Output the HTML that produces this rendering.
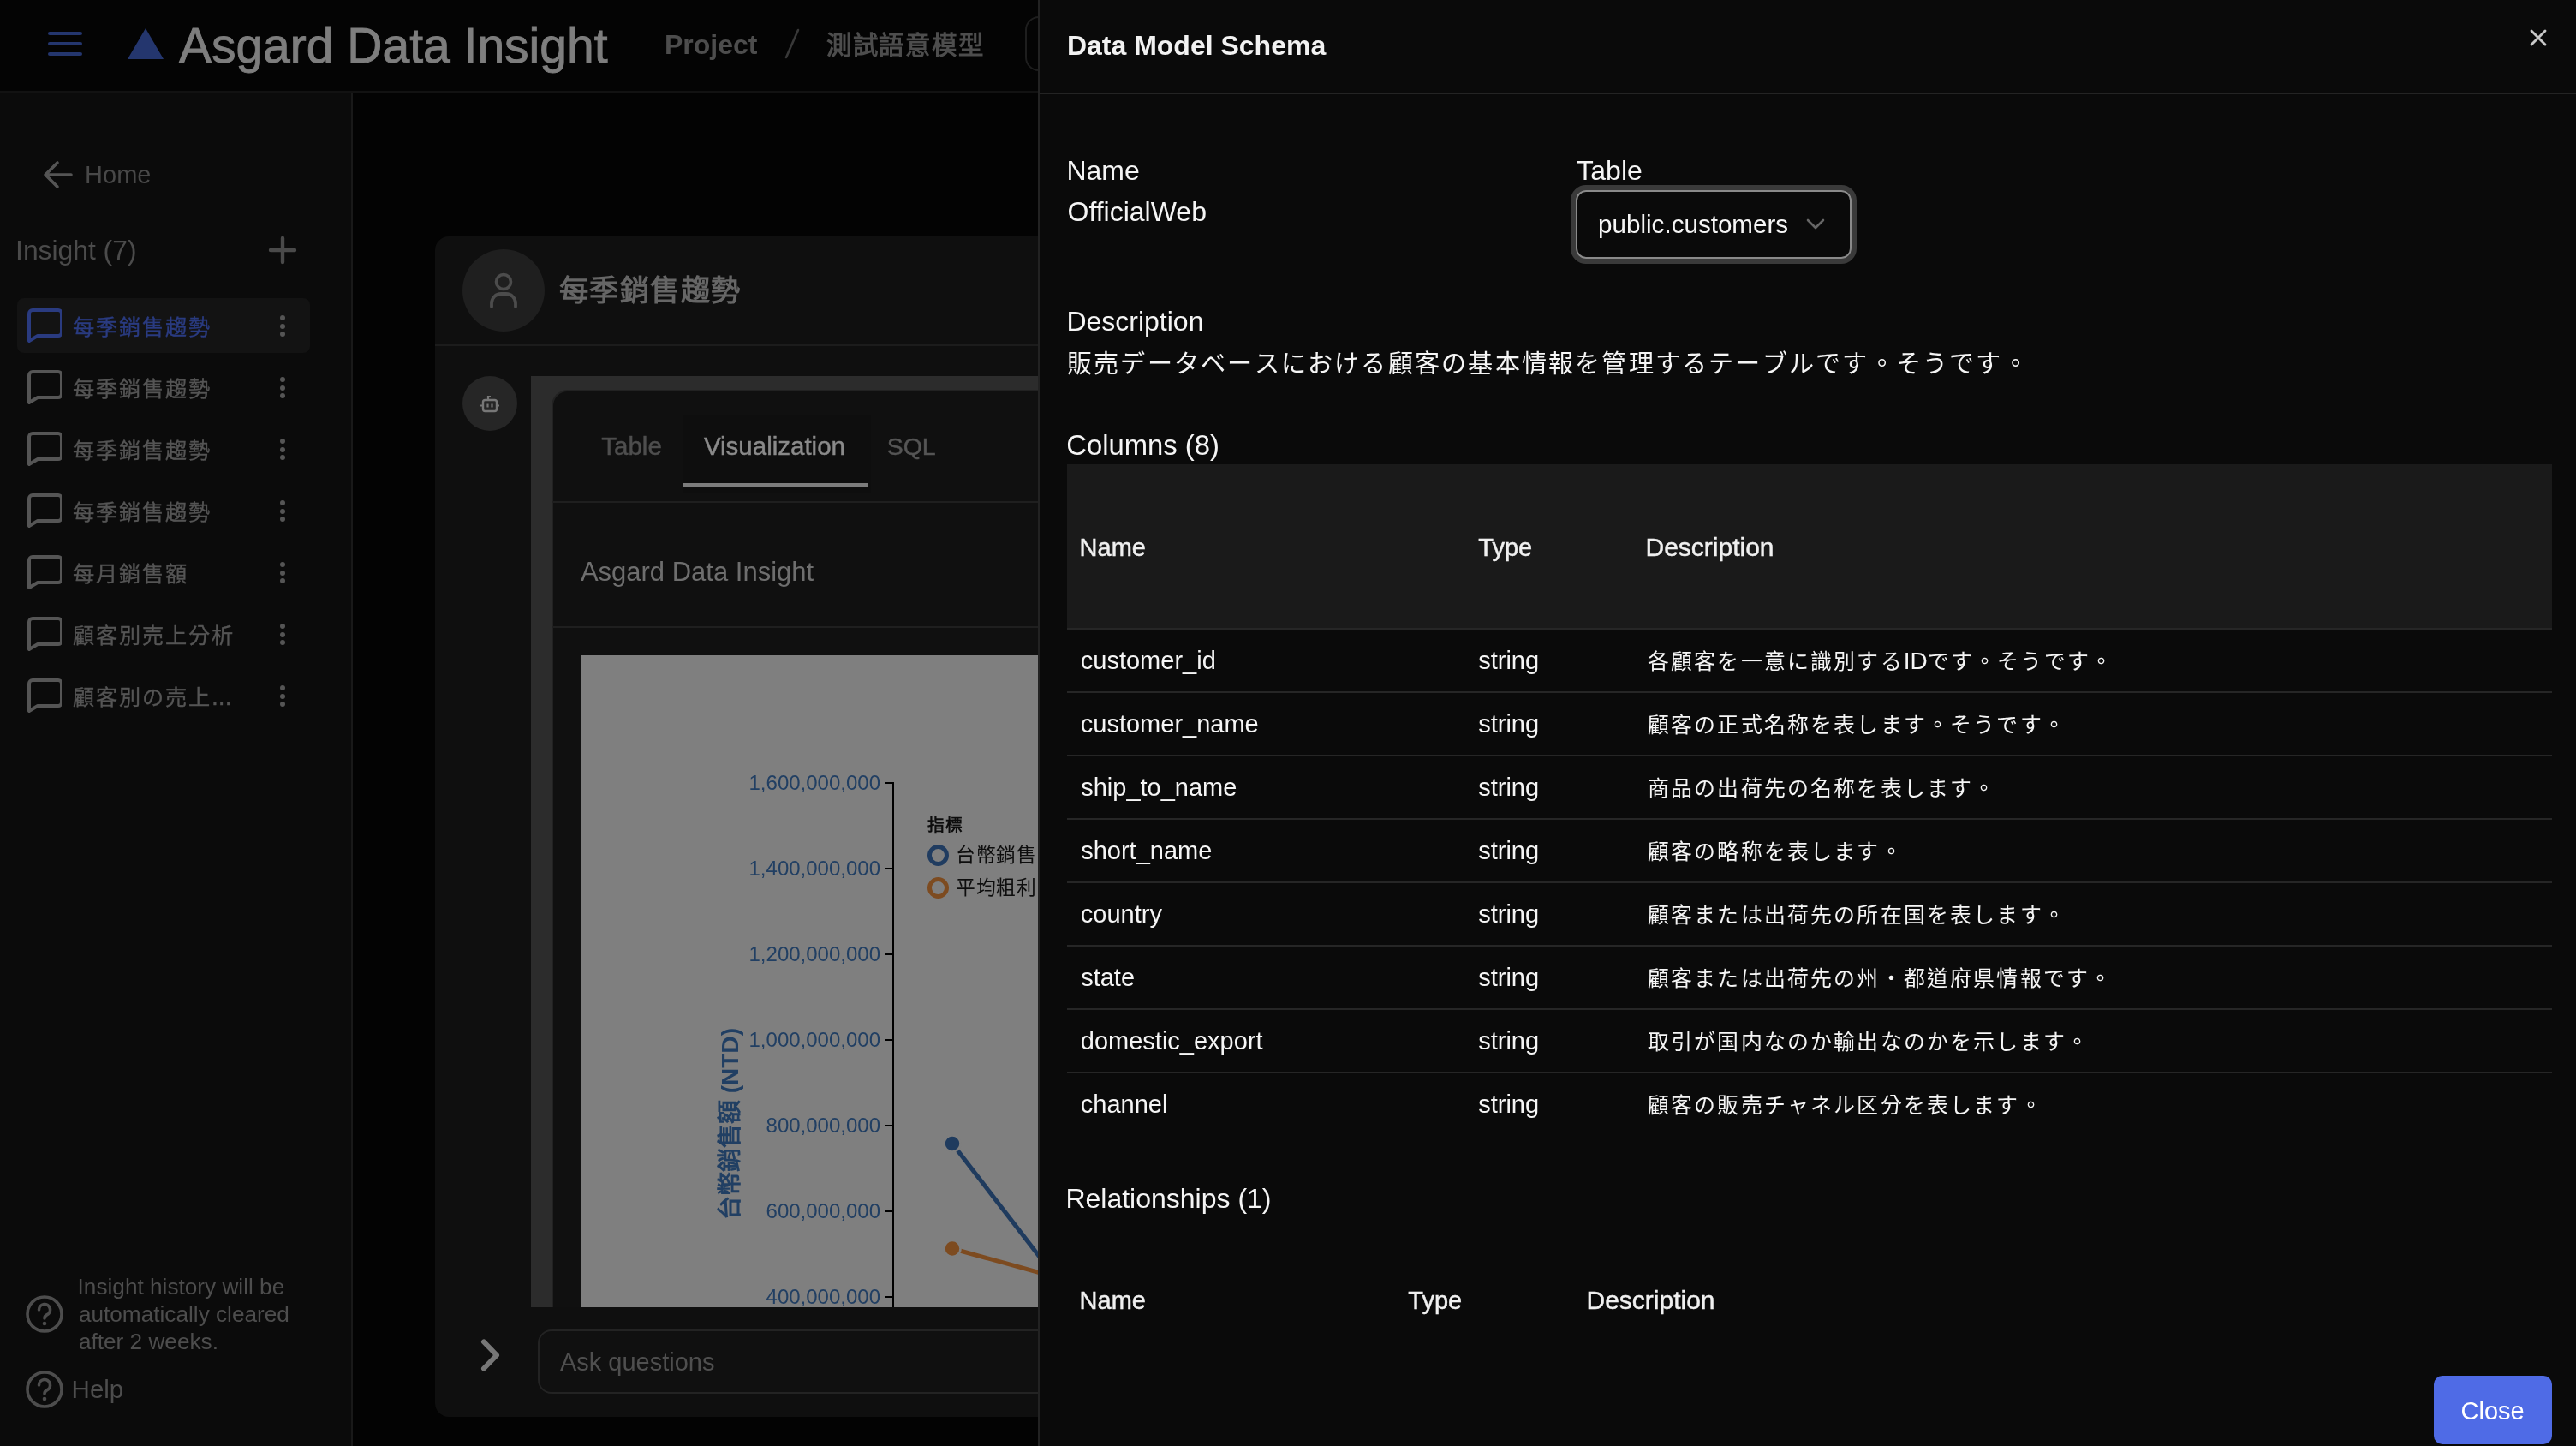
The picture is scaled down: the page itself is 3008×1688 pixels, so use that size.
<!DOCTYPE html>
<html lang="zh-TW"><head><meta charset="utf-8"><title>Data Model Schema</title>
<style>
html,body{margin:0;padding:0;}
body{width:3008px;height:1688px;overflow:hidden;position:relative;background:#030303;font-family:"Liberation Sans",sans-serif;}
#root{position:absolute;left:0;top:0;width:3008px;height:1688px;will-change:transform;}
#root>div,#root>svg{position:absolute;}
.t{white-space:nowrap;}
i{display:inline-block;font-style:normal;}
</style></head><body><div id="root">
<div style="left:0px;top:0px;width:3008px;height:106px;background:#040404;"></div>
<div style="left:0px;top:106px;width:1212px;height:2px;background:#121212;"></div>
<div style="left:56px;top:37px;width:40px;height:4px;background:#24366e;border-radius:2px;"></div>
<div style="left:56px;top:49px;width:40px;height:4px;background:#24366e;border-radius:2px;"></div>
<div style="left:56px;top:61px;width:40px;height:4px;background:#24366e;border-radius:2px;"></div>
<svg style="left:149px;top:33px" width="42" height="36" viewBox="0 0 42 36"><polygon points="21,0 42,36 0,36" fill="#24366e"/></svg>
<div class="t" style="left:208.9px;top:18.3px;font-size:57px;line-height:71px;color:#7e7e7e;-webkit-text-stroke:0.9px currentColor;">Asgard Data Insight</div>
<div class="t" style="left:775.9px;top:31.9px;font-size:32px;line-height:40px;color:#4d4d4d;font-weight:700;">Project</div>
<svg style="left:910px;top:30px" width="30" height="42" viewBox="0 0 30 42"><path d="M22 5L8 37" stroke="#383838" stroke-width="2.6" stroke-linecap="round"/></svg>
<div class="t" style="left:965.0px;top:31.9px;font-size:32px;line-height:40px;color:#4d4d4d;font-weight:700;"><i style="width:30.72px;font-size:29.44px">測</i><i style="width:30.72px;font-size:29.44px">試</i><i style="width:30.72px;font-size:29.44px">語</i><i style="width:30.72px;font-size:29.44px">意</i><i style="width:30.72px;font-size:29.44px">模</i><i style="width:30.72px;font-size:29.44px">型</i></div>
<div style="left:1197px;top:19px;width:60px;height:64px;background:transparent;border:2px solid #1e1e1e;border-radius:16px;box-sizing:border-box;"></div>
<div style="left:0px;top:108px;width:410px;height:1580px;background:#0b0b0b;"></div>
<div style="left:410px;top:108px;width:2px;height:1580px;background:#191919;"></div>
<svg style="left:50px;top:186px" width="36" height="36" viewBox="0 0 36 36"><path d="M33 18H4M17 4L3 18l14 14" fill="none" stroke="#555" stroke-width="3.6" stroke-linecap="round" stroke-linejoin="round"/></svg>
<div class="t" style="left:99.1px;top:185.9px;font-size:29px;line-height:36px;color:#484848;">Home</div>
<div class="t" style="left:18.1px;top:272.0px;font-size:31.8px;line-height:40px;color:#4b4b4b;">Insight (7)</div>
<svg style="left:312px;top:274px" width="36" height="36" viewBox="0 0 36 36"><path d="M18 4v28M4 18h28" fill="none" stroke="#4a4a4a" stroke-width="4.4" stroke-linecap="round"/></svg>
<div style="left:20px;top:348px;width:342px;height:64px;background:#131313;border-radius:8px;"></div>
<svg style="left:32px;top:360px" width="40" height="40" viewBox="0 0 40 40"><path d="M2 38V6a4 4 0 0 1 4-4h30a4 4 0 0 1 4 4v22a4 4 0 0 1-4 4H12z" fill="none" stroke="#2a3b80" stroke-width="4" stroke-linejoin="round"/></svg>
<div class="t" style="left:85.0px;top:363.8px;font-size:28px;line-height:35px;color:#2a3b80;-webkit-text-stroke:0.35px currentColor;"><i style="width:27.02px;font-size:25.20px">每</i><i style="width:27.02px;font-size:25.20px">季</i><i style="width:27.02px;font-size:25.20px">銷</i><i style="width:27.02px;font-size:25.20px">售</i><i style="width:27.02px;font-size:25.20px">趨</i><i style="width:27.02px;font-size:25.20px">勢</i></div>
<div style="left:327px;top:368.0px;width:6px;height:6px;background:#555;border-radius:3px;"></div>
<div style="left:327px;top:377.5px;width:6px;height:6px;background:#555;border-radius:3px;"></div>
<div style="left:327px;top:387.0px;width:6px;height:6px;background:#555;border-radius:3px;"></div>
<svg style="left:32px;top:432px" width="40" height="40" viewBox="0 0 40 40"><path d="M2 38V6a4 4 0 0 1 4-4h30a4 4 0 0 1 4 4v22a4 4 0 0 1-4 4H12z" fill="none" stroke="#555555" stroke-width="4" stroke-linejoin="round"/></svg>
<div class="t" style="left:85.0px;top:435.8px;font-size:28px;line-height:35px;color:#555555;-webkit-text-stroke:0.35px currentColor;"><i style="width:27.02px;font-size:25.20px">每</i><i style="width:27.02px;font-size:25.20px">季</i><i style="width:27.02px;font-size:25.20px">銷</i><i style="width:27.02px;font-size:25.20px">售</i><i style="width:27.02px;font-size:25.20px">趨</i><i style="width:27.02px;font-size:25.20px">勢</i></div>
<div style="left:327px;top:440.0px;width:6px;height:6px;background:#555;border-radius:3px;"></div>
<div style="left:327px;top:449.5px;width:6px;height:6px;background:#555;border-radius:3px;"></div>
<div style="left:327px;top:459.0px;width:6px;height:6px;background:#555;border-radius:3px;"></div>
<svg style="left:32px;top:504px" width="40" height="40" viewBox="0 0 40 40"><path d="M2 38V6a4 4 0 0 1 4-4h30a4 4 0 0 1 4 4v22a4 4 0 0 1-4 4H12z" fill="none" stroke="#555555" stroke-width="4" stroke-linejoin="round"/></svg>
<div class="t" style="left:85.0px;top:507.8px;font-size:28px;line-height:35px;color:#555555;-webkit-text-stroke:0.35px currentColor;"><i style="width:27.02px;font-size:25.20px">每</i><i style="width:27.02px;font-size:25.20px">季</i><i style="width:27.02px;font-size:25.20px">銷</i><i style="width:27.02px;font-size:25.20px">售</i><i style="width:27.02px;font-size:25.20px">趨</i><i style="width:27.02px;font-size:25.20px">勢</i></div>
<div style="left:327px;top:512.0px;width:6px;height:6px;background:#555;border-radius:3px;"></div>
<div style="left:327px;top:521.5px;width:6px;height:6px;background:#555;border-radius:3px;"></div>
<div style="left:327px;top:531.0px;width:6px;height:6px;background:#555;border-radius:3px;"></div>
<svg style="left:32px;top:576px" width="40" height="40" viewBox="0 0 40 40"><path d="M2 38V6a4 4 0 0 1 4-4h30a4 4 0 0 1 4 4v22a4 4 0 0 1-4 4H12z" fill="none" stroke="#555555" stroke-width="4" stroke-linejoin="round"/></svg>
<div class="t" style="left:85.0px;top:579.8px;font-size:28px;line-height:35px;color:#555555;-webkit-text-stroke:0.35px currentColor;"><i style="width:27.02px;font-size:25.20px">每</i><i style="width:27.02px;font-size:25.20px">季</i><i style="width:27.02px;font-size:25.20px">銷</i><i style="width:27.02px;font-size:25.20px">售</i><i style="width:27.02px;font-size:25.20px">趨</i><i style="width:27.02px;font-size:25.20px">勢</i></div>
<div style="left:327px;top:584.0px;width:6px;height:6px;background:#555;border-radius:3px;"></div>
<div style="left:327px;top:593.5px;width:6px;height:6px;background:#555;border-radius:3px;"></div>
<div style="left:327px;top:603.0px;width:6px;height:6px;background:#555;border-radius:3px;"></div>
<svg style="left:32px;top:648px" width="40" height="40" viewBox="0 0 40 40"><path d="M2 38V6a4 4 0 0 1 4-4h30a4 4 0 0 1 4 4v22a4 4 0 0 1-4 4H12z" fill="none" stroke="#555555" stroke-width="4" stroke-linejoin="round"/></svg>
<div class="t" style="left:85.0px;top:651.8px;font-size:28px;line-height:35px;color:#555555;-webkit-text-stroke:0.35px currentColor;"><i style="width:27.02px;font-size:25.20px">每</i><i style="width:27.02px;font-size:25.20px">月</i><i style="width:27.02px;font-size:25.20px">銷</i><i style="width:27.02px;font-size:25.20px">售</i><i style="width:27.02px;font-size:25.20px">額</i></div>
<div style="left:327px;top:656.0px;width:6px;height:6px;background:#555;border-radius:3px;"></div>
<div style="left:327px;top:665.5px;width:6px;height:6px;background:#555;border-radius:3px;"></div>
<div style="left:327px;top:675.0px;width:6px;height:6px;background:#555;border-radius:3px;"></div>
<svg style="left:32px;top:720px" width="40" height="40" viewBox="0 0 40 40"><path d="M2 38V6a4 4 0 0 1 4-4h30a4 4 0 0 1 4 4v22a4 4 0 0 1-4 4H12z" fill="none" stroke="#555555" stroke-width="4" stroke-linejoin="round"/></svg>
<div class="t" style="left:85.0px;top:723.8px;font-size:28px;line-height:35px;color:#555555;-webkit-text-stroke:0.35px currentColor;"><i style="width:27.02px;font-size:25.20px">顧</i><i style="width:27.02px;font-size:25.20px">客</i><i style="width:27.02px;font-size:25.20px">別</i><i style="width:27.02px;font-size:25.20px">売</i><i style="width:27.02px;font-size:25.20px">上</i><i style="width:27.02px;font-size:25.20px">分</i><i style="width:27.02px;font-size:25.20px">析</i></div>
<div style="left:327px;top:728.0px;width:6px;height:6px;background:#555;border-radius:3px;"></div>
<div style="left:327px;top:737.5px;width:6px;height:6px;background:#555;border-radius:3px;"></div>
<div style="left:327px;top:747.0px;width:6px;height:6px;background:#555;border-radius:3px;"></div>
<svg style="left:32px;top:792px" width="40" height="40" viewBox="0 0 40 40"><path d="M2 38V6a4 4 0 0 1 4-4h30a4 4 0 0 1 4 4v22a4 4 0 0 1-4 4H12z" fill="none" stroke="#555555" stroke-width="4" stroke-linejoin="round"/></svg>
<div class="t" style="left:85.0px;top:795.8px;font-size:28px;line-height:35px;color:#555555;-webkit-text-stroke:0.35px currentColor;"><i style="width:27.02px;font-size:25.20px">顧</i><i style="width:27.02px;font-size:25.20px">客</i><i style="width:27.02px;font-size:25.20px">別</i><i style="width:27.02px;font-size:25.20px">の</i><i style="width:27.02px;font-size:25.20px">売</i><i style="width:27.02px;font-size:25.20px">上</i>...</div>
<div style="left:327px;top:800.0px;width:6px;height:6px;background:#555;border-radius:3px;"></div>
<div style="left:327px;top:809.5px;width:6px;height:6px;background:#555;border-radius:3px;"></div>
<div style="left:327px;top:819.0px;width:6px;height:6px;background:#555;border-radius:3px;"></div>
<svg style="left:30px;top:1512px" width="44" height="44" viewBox="0 0 44 44"><circle cx="22" cy="22" r="20" fill="none" stroke="#4d4d4d" stroke-width="3.6"/><path d="M15.5 17a6.5 6.5 0 1 1 9 6c-1.8 .8-2.5 1.8-2.5 4" fill="none" stroke="#4d4d4d" stroke-width="3.6" stroke-linecap="round"/><circle cx="22" cy="33" r="2.3" fill="#4d4d4d"/></svg>
<div class="t" style="left:90.6px;top:1486.4px;font-size:26.2px;line-height:33px;color:#4d4d4d;">Insight history will be</div>
<div class="t" style="left:91.9px;top:1518.4px;font-size:26.2px;line-height:33px;color:#4d4d4d;">automatically cleared</div>
<div class="t" style="left:91.9px;top:1550.4px;font-size:26.2px;line-height:33px;color:#4d4d4d;">after 2 weeks.</div>
<svg style="left:30px;top:1600px" width="44" height="44" viewBox="0 0 44 44"><circle cx="22" cy="22" r="20" fill="none" stroke="#4d4d4d" stroke-width="3.6"/><path d="M15.5 17a6.5 6.5 0 1 1 9 6c-1.8 .8-2.5 1.8-2.5 4" fill="none" stroke="#4d4d4d" stroke-width="3.6" stroke-linecap="round"/><circle cx="22" cy="33" r="2.3" fill="#4d4d4d"/></svg>
<div class="t" style="left:83.6px;top:1603.3px;font-size:29.5px;line-height:37px;color:#4d4d4d;">Help</div>
<div style="left:412px;top:108px;width:800px;height:1580px;background:#030303;"></div>
<div style="left:508px;top:276px;width:720px;height:1378px;background:#0f0f0f;border-radius:16px;"></div>
<div style="left:540px;top:291px;width:96px;height:96px;background:#1f1f1f;border-radius:50%;"></div>
<svg style="left:568px;top:316px" width="40" height="46" viewBox="0 0 40 46"><circle cx="20" cy="13" r="8.5" fill="none" stroke="#4c4c4c" stroke-width="3.6"/><path d="M6 42v-4a11 11 0 0 1 11-11h6a11 11 0 0 1 11 11v4" fill="none" stroke="#4c4c4c" stroke-width="3.8" stroke-linecap="round"/></svg>
<div class="t" style="left:653.0px;top:316.0px;font-size:36px;line-height:45px;color:#666666;font-weight:700;"><i style="width:35.46px;font-size:34.20px">每</i><i style="width:35.46px;font-size:34.20px">季</i><i style="width:35.46px;font-size:34.20px">銷</i><i style="width:35.46px;font-size:34.20px">售</i><i style="width:35.46px;font-size:34.20px">趨</i><i style="width:35.46px;font-size:34.20px">勢</i></div>
<div style="left:508px;top:402px;width:704px;height:2px;background:#1c1c1c;"></div>
<div style="left:540px;top:439px;width:64px;height:64px;background:#262626;border-radius:50%;"></div>
<svg style="left:558px;top:458px" width="28" height="26" viewBox="0 0 28 26"><rect x="6" y="9" width="16" height="13" rx="2.5" fill="none" stroke="#777" stroke-width="2.4"/><path d="M12 9V5h3" fill="none" stroke="#777" stroke-width="2.2"/><path d="M3 15.5h3M22 15.5h3M11.5 13.5v4M16.5 13.5v4" stroke="#777" stroke-width="2.2"/></svg>
<div style="left:620px;top:439px;width:600px;height:1087px;background:#2c2c2c;"></div>
<div style="left:644px;top:455px;width:581px;height:1071px;background:#101010;border-top:2px solid #222;border-left:2px solid #222;box-sizing:border-box;border-top-left-radius:19px;"></div>
<div style="left:797px;top:484px;width:220px;height:92px;background:#0e0e0e;"></div>
<div class="t" style="left:702.3px;top:502.3px;font-size:29.5px;line-height:37px;color:#4e4e4e;-webkit-text-stroke:0.45px currentColor;">Table</div>
<div class="t" style="left:821.9px;top:502.3px;font-size:29.5px;line-height:37px;color:#8a8a8a;-webkit-text-stroke:0.45px currentColor;">Visualization</div>
<div class="t" style="left:1035.7px;top:503.1px;font-size:28.5px;line-height:36px;color:#555555;-webkit-text-stroke:0.45px currentColor;">SQL</div>
<div style="left:797px;top:564px;width:216px;height:4px;background:#7c7c7c;"></div>
<div style="left:645px;top:585px;width:570px;height:2px;background:#1f1f1f;"></div>
<div class="t" style="left:677.9px;top:647.8px;font-size:31px;line-height:39px;color:#6e6e6e;">Asgard Data Insight</div>
<div style="left:645px;top:731px;width:570px;height:2px;background:#1f1f1f;"></div>
<div style="left:678px;top:765px;width:534px;height:761px;background:#7f7f7f;"></div>
<div style="left:1042px;top:913px;width:2px;height:613px;background:#000;"></div>
<div style="left:1033px;top:913px;width:10px;height:2px;background:#000;"></div>
<div class="t" style="left:700px;width:328px;text-align:right;top:899px;font-size:24px;line-height:30px;color:#213f63">1,600,000,000</div>
<div style="left:1033px;top:1013px;width:10px;height:2px;background:#000;"></div>
<div class="t" style="left:700px;width:328px;text-align:right;top:999px;font-size:24px;line-height:30px;color:#213f63">1,400,000,000</div>
<div style="left:1033px;top:1113px;width:10px;height:2px;background:#000;"></div>
<div class="t" style="left:700px;width:328px;text-align:right;top:1099px;font-size:24px;line-height:30px;color:#213f63">1,200,000,000</div>
<div style="left:1033px;top:1213px;width:10px;height:2px;background:#000;"></div>
<div class="t" style="left:700px;width:328px;text-align:right;top:1199px;font-size:24px;line-height:30px;color:#213f63">1,000,000,000</div>
<div style="left:1033px;top:1313px;width:10px;height:2px;background:#000;"></div>
<div class="t" style="left:700px;width:328px;text-align:right;top:1299px;font-size:24px;line-height:30px;color:#213f63">800,000,000</div>
<div style="left:1033px;top:1413px;width:10px;height:2px;background:#000;"></div>
<div class="t" style="left:700px;width:328px;text-align:right;top:1399px;font-size:24px;line-height:30px;color:#213f63">600,000,000</div>
<div style="left:1033px;top:1513px;width:10px;height:2px;background:#000;"></div>
<div class="t" style="left:700px;width:328px;text-align:right;top:1499px;font-size:24px;line-height:30px;color:#213f63">400,000,000</div>
<div class="t" style="left:853px;top:1312px;font-size:28px;line-height:30px;color:#213f63;font-weight:700;transform:translate(-50%,-50%) rotate(-90deg);white-space:nowrap">台幣銷售額 (NTD)</div>
<div class="t" style="left:1083.0px;top:949.4px;font-size:22px;line-height:28px;color:#0d0d0d;font-weight:700;"><i style="width:21.34px;font-size:19.80px">指</i><i style="width:21.34px;font-size:19.80px">標</i></div>
<div style="left:1083px;top:986px;width:25px;height:25px;border:5px solid #203c60;border-radius:50%;box-sizing:border-box"></div>
<div style="left:1083px;top:1024px;width:25px;height:25px;border:5px solid #7d4b20;border-radius:50%;box-sizing:border-box"></div>
<div class="t" style="left:1116.0px;top:982.7px;font-size:24px;line-height:30px;color:#0d0d0d;"><i style="width:23.64px;font-size:22.80px">台</i><i style="width:23.64px;font-size:22.80px">幣</i><i style="width:23.64px;font-size:22.80px">銷</i><i style="width:23.64px;font-size:22.80px">售</i><i style="width:23.64px;font-size:22.80px">額</i></div>
<div class="t" style="left:1116.0px;top:1020.7px;font-size:24px;line-height:30px;color:#0d0d0d;"><i style="width:23.64px;font-size:22.80px">平</i><i style="width:23.64px;font-size:22.80px">均</i><i style="width:23.64px;font-size:22.80px">粗</i><i style="width:23.64px;font-size:22.80px">利</i><i style="width:23.64px;font-size:22.80px">率</i></div>
<svg style="left:678px;top:765px" width="534" height="761" viewBox="678 765 534 761"><path d="M1112 1335L1230 1488" stroke="#1f3b5e" stroke-width="5"/><circle cx="1112" cy="1335" r="9.5" fill="#1f3b5e" stroke="#7f7f7f" stroke-width="2.5"/><path d="M1112 1457.5L1230 1490" stroke="#7d4b20" stroke-width="5"/><circle cx="1112" cy="1457.5" r="9.5" fill="#7d4b20" stroke="#7f7f7f" stroke-width="2.5"/></svg>
<svg style="left:556px;top:1558px" width="32" height="48" viewBox="0 0 32 48"><path d="M9 8.5l15 15.5-15 15.5" fill="none" stroke="#777" stroke-width="6" stroke-linecap="round" stroke-linejoin="round"/></svg>
<div style="left:628px;top:1552px;width:620px;height:75px;background:#101010;border:2px solid #232323;border-radius:16px;box-sizing:border-box;"></div>
<div class="t" style="left:653.9px;top:1571.9px;font-size:29px;line-height:36px;color:#4f4f4f;">Ask questions</div>
<div style="left:1212px;top:0px;width:1796px;height:1688px;background:#0a0a0a;"></div>
<div style="left:1212px;top:0px;width:2px;height:1688px;background:#222222;"></div>
<div class="t" style="left:1245.9px;top:32.9px;font-size:32px;line-height:40px;color:#f2f2f2;font-weight:700;">Data Model Schema</div>
<svg style="left:2950px;top:30px" width="28" height="28" viewBox="0 0 28 28"><path d="M6 6l16 16M22 6L6 22" stroke="#c8c8c8" stroke-width="2.9" stroke-linecap="round"/></svg>
<div style="left:1214px;top:108px;width:1794px;height:2px;background:#242424;"></div>
<div class="t" style="left:1245.4px;top:178.9px;font-size:32px;line-height:40px;color:#f5f5f5;">Name</div>
<div class="t" style="left:1246.5px;top:226.9px;font-size:32px;line-height:40px;color:#f5f5f5;">OfficialWeb</div>
<div class="t" style="left:1841.3px;top:178.9px;font-size:32px;line-height:40px;color:#f5f5f5;">Table</div>
<div style="left:1834px;top:216px;width:334px;height:92px;background:transparent;border:6px solid #3a3a3a;border-radius:18px;box-sizing:border-box;"></div>
<div style="left:1840px;top:222px;width:322px;height:80px;background:#0a0a0a;border:2px solid #8a8a8a;border-radius:12px;box-sizing:border-box;"></div>
<div class="t" style="left:1866.1px;top:243.2px;font-size:29.6px;line-height:37px;color:#f5f5f5;">public.customers</div>
<svg style="left:2108px;top:253px" width="24" height="16" viewBox="0 0 24 16"><path d="M3 4l9 9 9-9" fill="none" stroke="#666" stroke-width="2.6" stroke-linecap="round" stroke-linejoin="round"/></svg>
<div class="t" style="left:1245.4px;top:354.9px;font-size:32px;line-height:40px;color:#f5f5f5;">Description</div>
<div class="t" style="left:1246.0px;top:403.9px;font-size:32px;line-height:40px;color:#f5f5f5;"><i style="width:31.23px;font-size:29.12px">販</i><i style="width:31.23px;font-size:29.12px">売</i><i style="width:31.23px;font-size:29.12px">デ</i><i style="width:31.23px;font-size:29.12px">ー</i><i style="width:31.23px;font-size:29.12px">タ</i><i style="width:31.23px;font-size:29.12px">ベ</i><i style="width:31.23px;font-size:29.12px">ー</i><i style="width:31.23px;font-size:29.12px">ス</i><i style="width:31.23px;font-size:29.12px">に</i><i style="width:31.23px;font-size:29.12px">お</i><i style="width:31.23px;font-size:29.12px">け</i><i style="width:31.23px;font-size:29.12px">る</i><i style="width:31.23px;font-size:29.12px">顧</i><i style="width:31.23px;font-size:29.12px">客</i><i style="width:31.23px;font-size:29.12px">の</i><i style="width:31.23px;font-size:29.12px">基</i><i style="width:31.23px;font-size:29.12px">本</i><i style="width:31.23px;font-size:29.12px">情</i><i style="width:31.23px;font-size:29.12px">報</i><i style="width:31.23px;font-size:29.12px">を</i><i style="width:31.23px;font-size:29.12px">管</i><i style="width:31.23px;font-size:29.12px">理</i><i style="width:31.23px;font-size:29.12px">す</i><i style="width:31.23px;font-size:29.12px">る</i><i style="width:31.23px;font-size:29.12px">テ</i><i style="width:31.23px;font-size:29.12px">ー</i><i style="width:31.23px;font-size:29.12px">ブ</i><i style="width:31.23px;font-size:29.12px">ル</i><i style="width:31.23px;font-size:29.12px">で</i><i style="width:31.23px;font-size:29.12px">す</i><i style="width:31.23px;font-size:29.12px">。</i><i style="width:31.23px;font-size:29.12px">そ</i><i style="width:31.23px;font-size:29.12px">う</i><i style="width:31.23px;font-size:29.12px">で</i><i style="width:31.23px;font-size:29.12px">す</i><i style="width:31.23px;font-size:29.12px">。</i></div>
<div class="t" style="left:1245.3px;top:499.1px;font-size:32.8px;line-height:41px;color:#f5f5f5;">Columns (8)</div>
<div style="left:1246px;top:542px;width:1734px;height:191px;background:#1a1a1a;"></div>
<div style="left:1246px;top:733px;width:1734px;height:2px;background:#262626;"></div>
<div class="t" style="left:1260.6px;top:620.9px;font-size:29px;line-height:36px;color:#f0f0f0;-webkit-text-stroke:0.45px currentColor;">Name</div>
<div class="t" style="left:1726.3px;top:620.9px;font-size:29px;line-height:36px;color:#f0f0f0;-webkit-text-stroke:0.45px currentColor;">Type</div>
<div class="t" style="left:1921.5px;top:619.6px;font-size:30px;line-height:38px;color:#f0f0f0;-webkit-text-stroke:0.45px currentColor;">Description</div>
<div class="t" style="left:1261.8px;top:752.9px;font-size:29px;line-height:36px;color:#f5f5f5;">customer_id</div>
<div class="t" style="left:1726.2px;top:752.9px;font-size:29px;line-height:36px;color:#f5f5f5;">string</div>
<div class="t" style="left:1924.0px;top:753.8px;font-size:28px;line-height:35px;color:#f5f5f5;"><i style="width:27.16px;font-size:24.92px">各</i><i style="width:27.16px;font-size:24.92px">顧</i><i style="width:27.16px;font-size:24.92px">客</i><i style="width:27.16px;font-size:24.92px">を</i><i style="width:27.16px;font-size:24.92px">一</i><i style="width:27.16px;font-size:24.92px">意</i><i style="width:27.16px;font-size:24.92px">に</i><i style="width:27.16px;font-size:24.92px">識</i><i style="width:27.16px;font-size:24.92px">別</i><i style="width:27.16px;font-size:24.92px">す</i><i style="width:27.16px;font-size:24.92px">る</i>ID<i style="width:27.16px;font-size:24.92px">で</i><i style="width:27.16px;font-size:24.92px">す</i><i style="width:27.16px;font-size:24.92px">。</i><i style="width:27.16px;font-size:24.92px">そ</i><i style="width:27.16px;font-size:24.92px">う</i><i style="width:27.16px;font-size:24.92px">で</i><i style="width:27.16px;font-size:24.92px">す</i><i style="width:27.16px;font-size:24.92px">。</i></div>
<div style="left:1246px;top:807px;width:1734px;height:2px;background:#262626;"></div>
<div class="t" style="left:1261.8px;top:826.9px;font-size:29px;line-height:36px;color:#f5f5f5;">customer_name</div>
<div class="t" style="left:1726.2px;top:826.9px;font-size:29px;line-height:36px;color:#f5f5f5;">string</div>
<div class="t" style="left:1924.0px;top:827.8px;font-size:28px;line-height:35px;color:#f5f5f5;"><i style="width:27.16px;font-size:24.92px">顧</i><i style="width:27.16px;font-size:24.92px">客</i><i style="width:27.16px;font-size:24.92px">の</i><i style="width:27.16px;font-size:24.92px">正</i><i style="width:27.16px;font-size:24.92px">式</i><i style="width:27.16px;font-size:24.92px">名</i><i style="width:27.16px;font-size:24.92px">称</i><i style="width:27.16px;font-size:24.92px">を</i><i style="width:27.16px;font-size:24.92px">表</i><i style="width:27.16px;font-size:24.92px">し</i><i style="width:27.16px;font-size:24.92px">ま</i><i style="width:27.16px;font-size:24.92px">す</i><i style="width:27.16px;font-size:24.92px">。</i><i style="width:27.16px;font-size:24.92px">そ</i><i style="width:27.16px;font-size:24.92px">う</i><i style="width:27.16px;font-size:24.92px">で</i><i style="width:27.16px;font-size:24.92px">す</i><i style="width:27.16px;font-size:24.92px">。</i></div>
<div style="left:1246px;top:881px;width:1734px;height:2px;background:#262626;"></div>
<div class="t" style="left:1262.2px;top:900.9px;font-size:29px;line-height:36px;color:#f5f5f5;">ship_to_name</div>
<div class="t" style="left:1726.2px;top:900.9px;font-size:29px;line-height:36px;color:#f5f5f5;">string</div>
<div class="t" style="left:1924.0px;top:901.8px;font-size:28px;line-height:35px;color:#f5f5f5;"><i style="width:27.16px;font-size:24.92px">商</i><i style="width:27.16px;font-size:24.92px">品</i><i style="width:27.16px;font-size:24.92px">の</i><i style="width:27.16px;font-size:24.92px">出</i><i style="width:27.16px;font-size:24.92px">荷</i><i style="width:27.16px;font-size:24.92px">先</i><i style="width:27.16px;font-size:24.92px">の</i><i style="width:27.16px;font-size:24.92px">名</i><i style="width:27.16px;font-size:24.92px">称</i><i style="width:27.16px;font-size:24.92px">を</i><i style="width:27.16px;font-size:24.92px">表</i><i style="width:27.16px;font-size:24.92px">し</i><i style="width:27.16px;font-size:24.92px">ま</i><i style="width:27.16px;font-size:24.92px">す</i><i style="width:27.16px;font-size:24.92px">。</i></div>
<div style="left:1246px;top:955px;width:1734px;height:2px;background:#262626;"></div>
<div class="t" style="left:1262.2px;top:974.9px;font-size:29px;line-height:36px;color:#f5f5f5;">short_name</div>
<div class="t" style="left:1726.2px;top:974.9px;font-size:29px;line-height:36px;color:#f5f5f5;">string</div>
<div class="t" style="left:1924.0px;top:975.8px;font-size:28px;line-height:35px;color:#f5f5f5;"><i style="width:27.16px;font-size:24.92px">顧</i><i style="width:27.16px;font-size:24.92px">客</i><i style="width:27.16px;font-size:24.92px">の</i><i style="width:27.16px;font-size:24.92px">略</i><i style="width:27.16px;font-size:24.92px">称</i><i style="width:27.16px;font-size:24.92px">を</i><i style="width:27.16px;font-size:24.92px">表</i><i style="width:27.16px;font-size:24.92px">し</i><i style="width:27.16px;font-size:24.92px">ま</i><i style="width:27.16px;font-size:24.92px">す</i><i style="width:27.16px;font-size:24.92px">。</i></div>
<div style="left:1246px;top:1029px;width:1734px;height:2px;background:#262626;"></div>
<div class="t" style="left:1261.8px;top:1048.9px;font-size:29px;line-height:36px;color:#f5f5f5;">country</div>
<div class="t" style="left:1726.2px;top:1048.9px;font-size:29px;line-height:36px;color:#f5f5f5;">string</div>
<div class="t" style="left:1924.0px;top:1049.8px;font-size:28px;line-height:35px;color:#f5f5f5;"><i style="width:27.16px;font-size:24.92px">顧</i><i style="width:27.16px;font-size:24.92px">客</i><i style="width:27.16px;font-size:24.92px">ま</i><i style="width:27.16px;font-size:24.92px">た</i><i style="width:27.16px;font-size:24.92px">は</i><i style="width:27.16px;font-size:24.92px">出</i><i style="width:27.16px;font-size:24.92px">荷</i><i style="width:27.16px;font-size:24.92px">先</i><i style="width:27.16px;font-size:24.92px">の</i><i style="width:27.16px;font-size:24.92px">所</i><i style="width:27.16px;font-size:24.92px">在</i><i style="width:27.16px;font-size:24.92px">国</i><i style="width:27.16px;font-size:24.92px">を</i><i style="width:27.16px;font-size:24.92px">表</i><i style="width:27.16px;font-size:24.92px">し</i><i style="width:27.16px;font-size:24.92px">ま</i><i style="width:27.16px;font-size:24.92px">す</i><i style="width:27.16px;font-size:24.92px">。</i></div>
<div style="left:1246px;top:1103px;width:1734px;height:2px;background:#262626;"></div>
<div class="t" style="left:1262.2px;top:1122.9px;font-size:29px;line-height:36px;color:#f5f5f5;">state</div>
<div class="t" style="left:1726.2px;top:1122.9px;font-size:29px;line-height:36px;color:#f5f5f5;">string</div>
<div class="t" style="left:1924.0px;top:1123.8px;font-size:28px;line-height:35px;color:#f5f5f5;"><i style="width:27.16px;font-size:24.92px">顧</i><i style="width:27.16px;font-size:24.92px">客</i><i style="width:27.16px;font-size:24.92px">ま</i><i style="width:27.16px;font-size:24.92px">た</i><i style="width:27.16px;font-size:24.92px">は</i><i style="width:27.16px;font-size:24.92px">出</i><i style="width:27.16px;font-size:24.92px">荷</i><i style="width:27.16px;font-size:24.92px">先</i><i style="width:27.16px;font-size:24.92px">の</i><i style="width:27.16px;font-size:24.92px">州</i><i style="width:27.16px;font-size:24.92px">・</i><i style="width:27.16px;font-size:24.92px">都</i><i style="width:27.16px;font-size:24.92px">道</i><i style="width:27.16px;font-size:24.92px">府</i><i style="width:27.16px;font-size:24.92px">県</i><i style="width:27.16px;font-size:24.92px">情</i><i style="width:27.16px;font-size:24.92px">報</i><i style="width:27.16px;font-size:24.92px">で</i><i style="width:27.16px;font-size:24.92px">す</i><i style="width:27.16px;font-size:24.92px">。</i></div>
<div style="left:1246px;top:1177px;width:1734px;height:2px;background:#262626;"></div>
<div class="t" style="left:1261.8px;top:1196.9px;font-size:29px;line-height:36px;color:#f5f5f5;">domestic_export</div>
<div class="t" style="left:1726.2px;top:1196.9px;font-size:29px;line-height:36px;color:#f5f5f5;">string</div>
<div class="t" style="left:1924.0px;top:1197.8px;font-size:28px;line-height:35px;color:#f5f5f5;"><i style="width:27.16px;font-size:24.92px">取</i><i style="width:27.16px;font-size:24.92px">引</i><i style="width:27.16px;font-size:24.92px">が</i><i style="width:27.16px;font-size:24.92px">国</i><i style="width:27.16px;font-size:24.92px">内</i><i style="width:27.16px;font-size:24.92px">な</i><i style="width:27.16px;font-size:24.92px">の</i><i style="width:27.16px;font-size:24.92px">か</i><i style="width:27.16px;font-size:24.92px">輸</i><i style="width:27.16px;font-size:24.92px">出</i><i style="width:27.16px;font-size:24.92px">な</i><i style="width:27.16px;font-size:24.92px">の</i><i style="width:27.16px;font-size:24.92px">か</i><i style="width:27.16px;font-size:24.92px">を</i><i style="width:27.16px;font-size:24.92px">示</i><i style="width:27.16px;font-size:24.92px">し</i><i style="width:27.16px;font-size:24.92px">ま</i><i style="width:27.16px;font-size:24.92px">す</i><i style="width:27.16px;font-size:24.92px">。</i></div>
<div style="left:1246px;top:1251px;width:1734px;height:2px;background:#262626;"></div>
<div class="t" style="left:1261.8px;top:1270.9px;font-size:29px;line-height:36px;color:#f5f5f5;">channel</div>
<div class="t" style="left:1726.2px;top:1270.9px;font-size:29px;line-height:36px;color:#f5f5f5;">string</div>
<div class="t" style="left:1924.0px;top:1271.8px;font-size:28px;line-height:35px;color:#f5f5f5;"><i style="width:27.16px;font-size:24.92px">顧</i><i style="width:27.16px;font-size:24.92px">客</i><i style="width:27.16px;font-size:24.92px">の</i><i style="width:27.16px;font-size:24.92px">販</i><i style="width:27.16px;font-size:24.92px">売</i><i style="width:27.16px;font-size:24.92px">チ</i><i style="width:27.16px;font-size:24.92px">ャ</i><i style="width:27.16px;font-size:24.92px">ネ</i><i style="width:27.16px;font-size:24.92px">ル</i><i style="width:27.16px;font-size:24.92px">区</i><i style="width:27.16px;font-size:24.92px">分</i><i style="width:27.16px;font-size:24.92px">を</i><i style="width:27.16px;font-size:24.92px">表</i><i style="width:27.16px;font-size:24.92px">し</i><i style="width:27.16px;font-size:24.92px">ま</i><i style="width:27.16px;font-size:24.92px">す</i><i style="width:27.16px;font-size:24.92px">。</i></div>
<div class="t" style="left:1244.4px;top:1378.9px;font-size:32px;line-height:40px;color:#f5f5f5;">Relationships (1)</div>
<div class="t" style="left:1260.6px;top:1499.9px;font-size:29px;line-height:36px;color:#f0f0f0;-webkit-text-stroke:0.45px currentColor;">Name</div>
<div class="t" style="left:1644.3px;top:1499.9px;font-size:29px;line-height:36px;color:#f0f0f0;-webkit-text-stroke:0.45px currentColor;">Type</div>
<div class="t" style="left:1852.5px;top:1498.6px;font-size:30px;line-height:38px;color:#f0f0f0;-webkit-text-stroke:0.45px currentColor;">Description</div>
<div style="left:2842px;top:1606px;width:138px;height:80px;background:#4f6be6;border-radius:10px;"></div>
<div class="t" style="left:2873.5px;top:1628.9px;font-size:29px;line-height:36px;color:#ffffff;">Close</div>
</div></body></html>
